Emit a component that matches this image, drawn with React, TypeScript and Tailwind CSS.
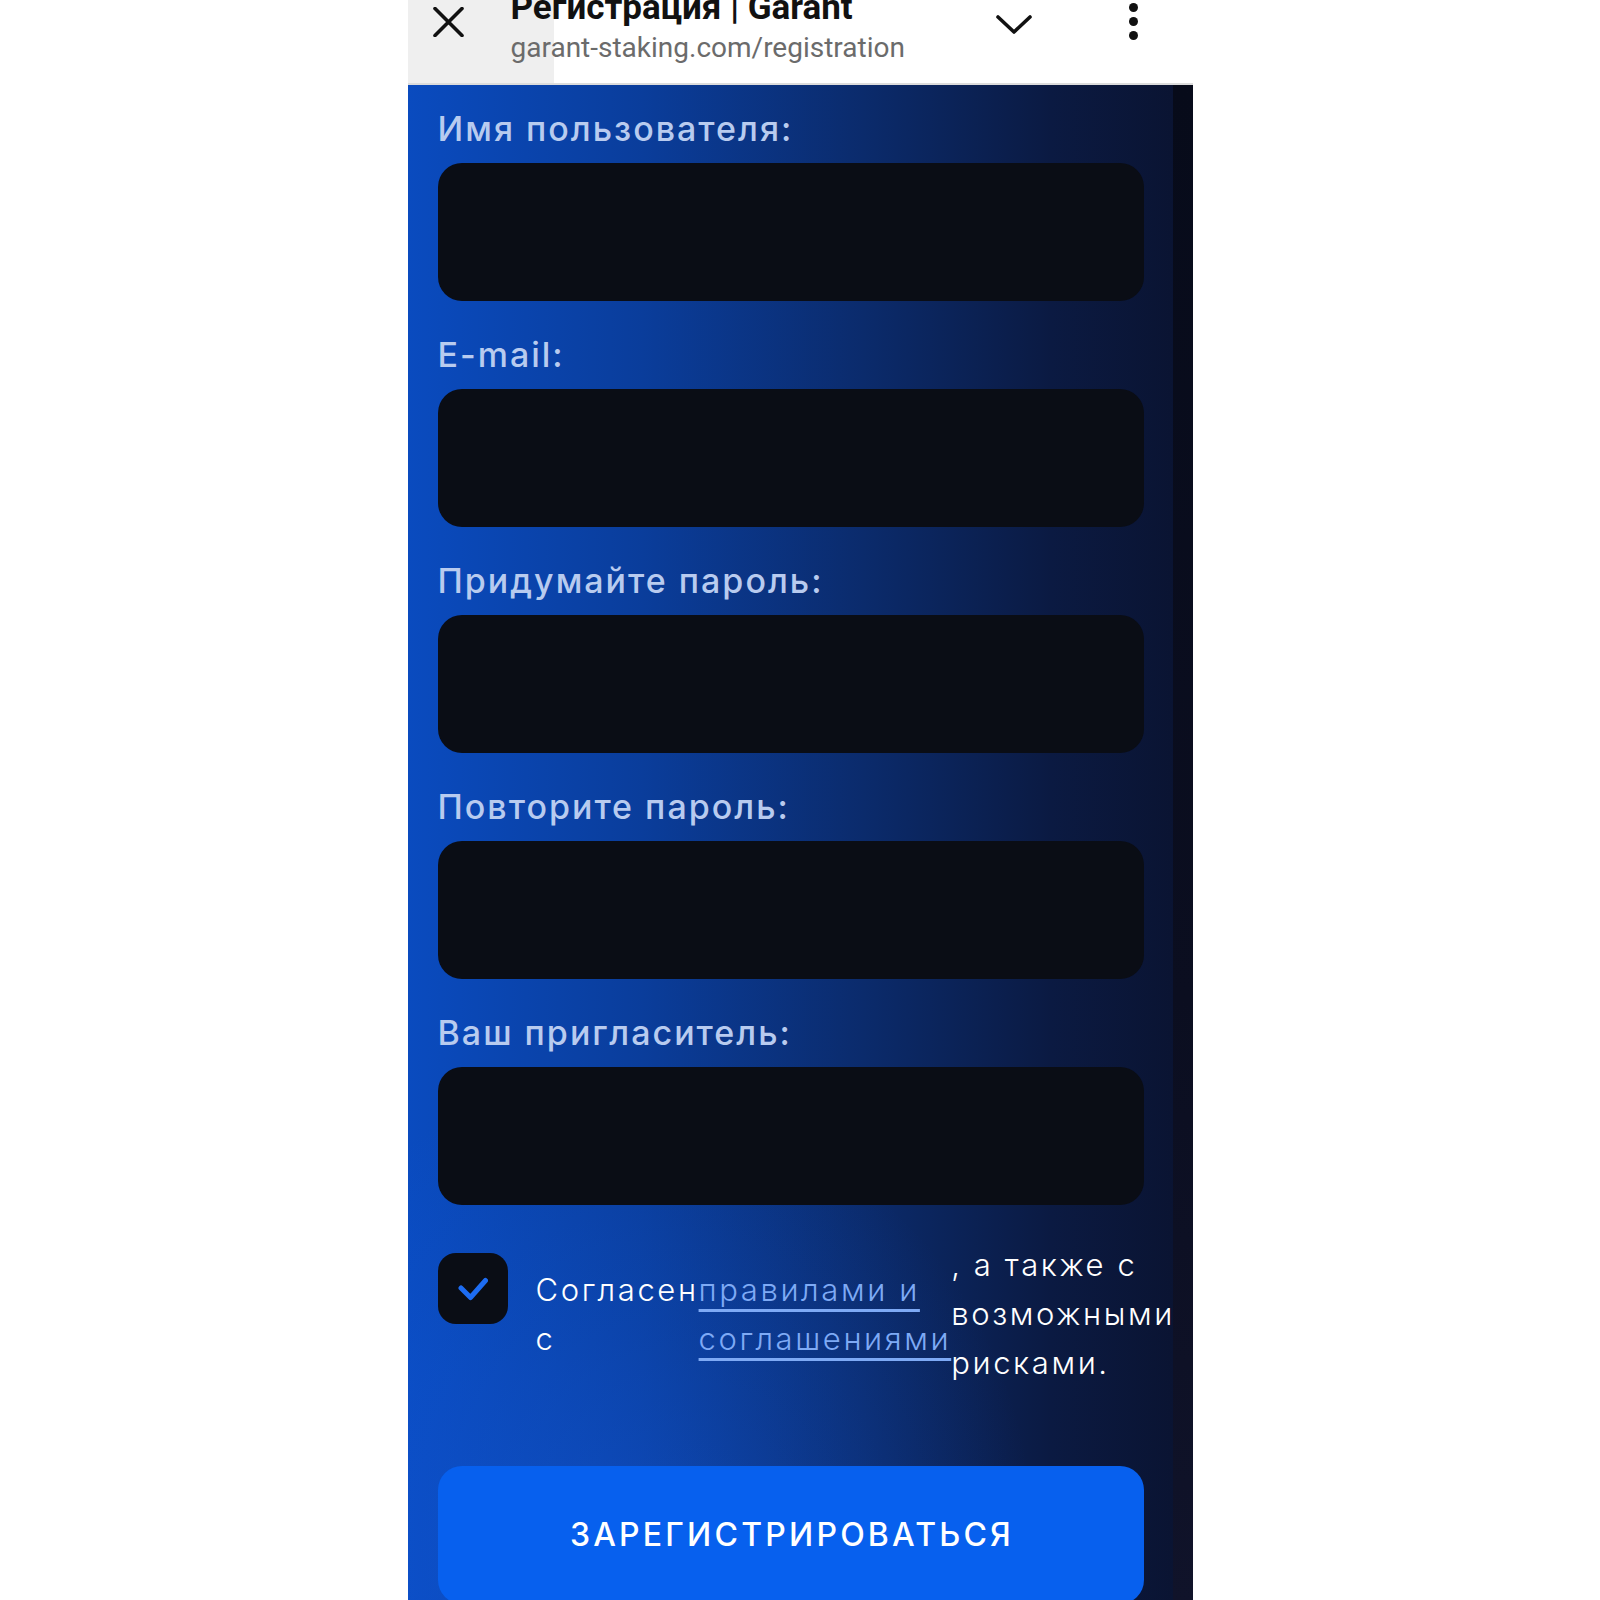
const FIELDS = [
  'Имя пользователя:',
  'E-mail:',
  'Придумайте пароль:',
  'Повторите пароль:',
  'Ваш пригласитель:',
];

function BrowserBar() {
  return (
    <div className="h-[85px] shrink-0 border-b-2 border-[#dcdcdc] bg-[linear-gradient(to_right,#efefef_146px,#ffffff_146px)] flex items-start pl-[25px] pr-[55px] font-['Roboto',sans-serif]">
      {/* close */}
      <svg width="31" height="30" viewBox="0 0 31 30" className="mt-[7px] shrink-0">
        <path d="M2 1.5 L29 28.5 M29 1.5 L2 28.5" stroke="#111" strokeWidth="3.6" strokeLinecap="round" />
      </svg>

      <div className="ml-[47px] flex-1 -mt-[12px] flex flex-col">
        <div className="text-[35px] leading-[40px] font-bold text-[#111] whitespace-nowrap">Регистрация | Garant</div>
        <div className="mt-[3px] text-[28px] leading-[34px] text-[#6b6b6b] whitespace-nowrap">garant-staking.com/registration</div>
      </div>

      {/* chevron */}
      <svg width="36" height="20" viewBox="0 0 36 20" className="mt-[15px] mr-[97px] shrink-0">
        <path d="M2 2 L18 17 L34 2" stroke="#111" strokeWidth="3.6" fill="none" strokeLinecap="round" strokeLinejoin="round" />
      </svg>

      {/* menu */}
      <div className="mt-[3px] flex flex-col items-center gap-[5px] shrink-0">
        <span className="h-[9px] w-[9px] rounded-full bg-[#111]" />
        <span className="h-[9px] w-[9px] rounded-full bg-[#111]" />
        <span className="h-[9px] w-[9px] rounded-full bg-[#111]" />
      </div>
    </div>
  );
}

export default function App() {
  return (
    <div className="h-[1600px] w-[1600px] overflow-hidden bg-white">
      <div className="mx-auto flex h-full w-[785px] flex-col">
        <BrowserBar />

        <div className="flex flex-1 bg-[radial-gradient(ellipse_55%_30%_at_25%_96%,rgba(20,95,235,0.35),transparent),linear-gradient(to_right,#0a4bbf_0%,#0a3d9b_30%,#0b2b6c_58%,#0b1a42_82%,#0a1330_100%)]">
          <div className="min-w-0 flex-1 pl-[30px] pr-[29px] pt-[24px] font-['Inter','Noto_Sans',sans-serif]">
            {FIELDS.map((label, i) => (
              <div key={label} className={i > 0 ? 'mt-[34px]' : ''}>
                <div className="text-[34px] leading-[40px] font-medium tracking-[2px] text-[#b8cbef]">{label}</div>
                <div className="mt-[14px] h-[138px] w-full rounded-[24px] bg-[#0a0d15]" />
              </div>
            ))}

            <div className="mt-[35px] flex items-start">
              <div className="mt-[13px] flex h-[71px] w-[70px] shrink-0 items-center justify-center rounded-[18px] bg-[#0a0d15]">
                <svg width="30" height="24" viewBox="0 0 30 24">
                  <path d="M3 11 L12.5 20.5 L27.5 3.5" stroke="#1d6cf2" strokeWidth="5" fill="none" strokeLinecap="round" strokeLinejoin="round" />
                </svg>
              </div>
              <div className="ml-[28px] flex items-center text-[31px] leading-[49px] font-light tracking-[2.6px] text-white">
                <span className="w-min">Согласен с</span>
                <a href="#" className="w-min text-[#7eaaf5] underline underline-offset-[8px] decoration-[2.5px]">правилами и соглашениями</a>
                <span className="w-min">, а также с возможными рисками.</span>
              </div>
            </div>

            <button className="mt-[79px] h-[138px] w-full rounded-[24px] bg-[#0760ee] pl-[3px] text-[32px] font-medium tracking-[3.2px] text-white">
              ЗАРЕГИСТРИРОВАТЬСЯ
            </button>
          </div>
          <div className="w-[20px] shrink-0 bg-[linear-gradient(to_bottom,#070b1a,#0b0e20_60%,#10132a)]" />
        </div>
      </div>
    </div>
  );
}
